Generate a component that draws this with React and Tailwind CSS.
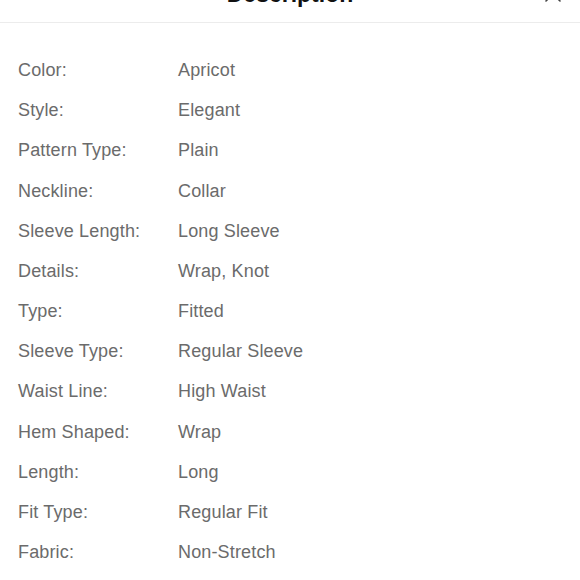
import React from "react";

const rows = [
  ["Color:", "Apricot"],
  ["Style:", "Elegant"],
  ["Pattern Type:", "Plain"],
  ["Neckline:", "Collar"],
  ["Sleeve Length:", "Long Sleeve"],
  ["Details:", "Wrap, Knot"],
  ["Type:", "Fitted"],
  ["Sleeve Type:", "Regular Sleeve"],
  ["Waist Line:", "High Waist"],
  ["Hem Shaped:", "Wrap"],
  ["Length:", "Long"],
  ["Fit Type:", "Regular Fit"],
  ["Fabric:", "Non-Stretch"],
];

export default function App() {
  return (
    <div className="w-[580px] h-[580px] overflow-hidden bg-white" style={{ fontFamily: '"Liberation Sans", Arial, sans-serif' }}>
      <div className="relative mt-[-35px] h-[58px] flex items-center justify-center border-b border-[#ececec]">
        <span className="text-[23px] leading-[28px] font-bold text-[#111]">Description</span>
        <svg className="absolute right-[18px] top-[20px]" width="18" height="18" viewBox="0 0 18 18" fill="none" stroke="#444" strokeWidth="1.6" strokeLinecap="round">
          <path d="M2 2L16 16M16 2L2 16" />
        </svg>
      </div>
      <div className="pt-[27px] px-[18px] grid grid-cols-[160px_1fr] text-[18px] leading-[40.17px] tracking-[0.15px] text-[#6b6b6b]">
        {rows.map(([k, v]) => (
          <React.Fragment key={k}>
            <div>{k}</div>
            <div>{v}</div>
          </React.Fragment>
        ))}
      </div>
    </div>
  );
}
